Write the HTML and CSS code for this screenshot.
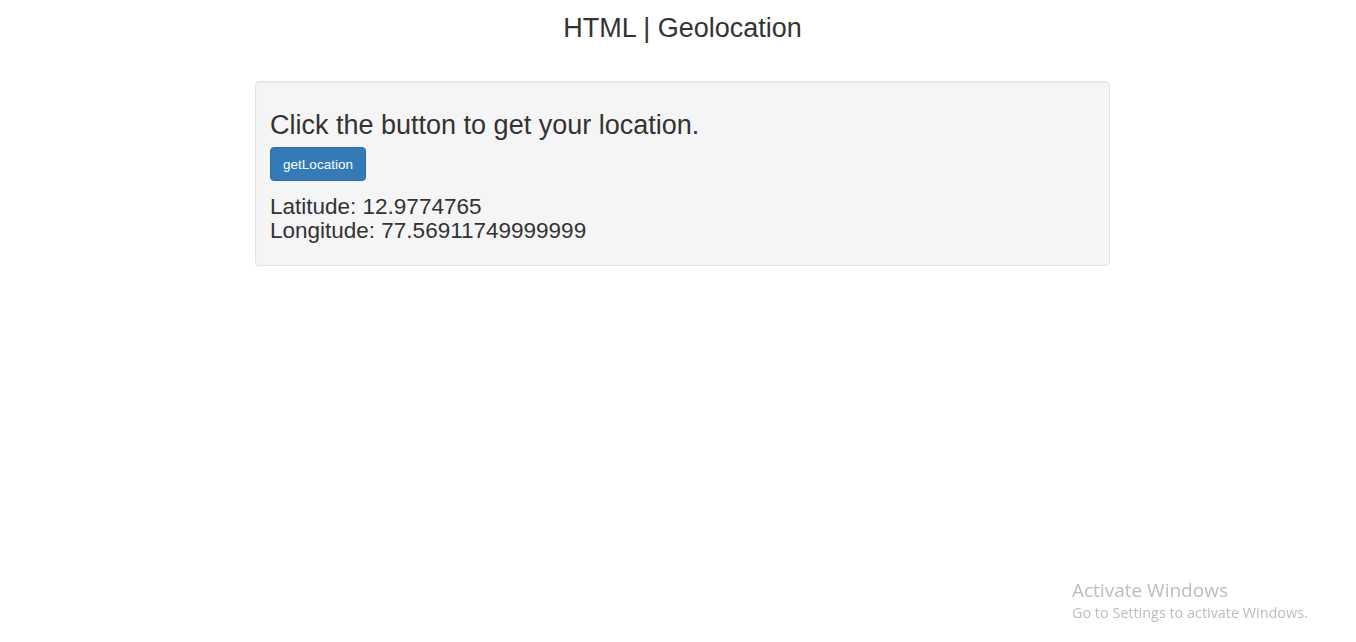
FILE: index.html
```html
<!DOCTYPE html>
<html>
<head>
<meta charset="utf-8">
<title>HTML | Geolocation</title>
<link rel="stylesheet" href="styles.css">
</head>
<body>
<div class="container">
  <h1 class="title">HTML | Geolocation</h1>
  <div class="well">
    <p class="lead">Click the button to get your location.</p>
    <button class="btn">getLocation</button>
    <p class="coords">Latitude: 12.9774765<br>Longitude: 77.56911749999999</p>
  </div>
</div>
<div class="watermark">
  <div class="wm-title">Activate Windows</div>
  <div class="wm-sub">Go to Settings to activate Windows.</div>
</div>
</body>
</html>
```
FILE: styles.css
```css
html, body {
  margin: 0;
  padding: 0;
  background: #fff;
}
body {
  font-family: "Liberation Sans", Arial, sans-serif;
  color: #333;
}
.container {
  width: 855px;
  margin-left: 255px;
}
.title {
  margin: 0;
  padding-top: 13px;
  text-align: center;
  font-size: 27px;
  font-weight: 400;
  line-height: 30px;
  color: #333;
}
.well {
  margin-top: 38px;
  min-height: 185px;
  box-sizing: border-box;
  background: #f5f5f5;
  border: 1px solid #e3e3e3;
  border-radius: 4px;
  padding: 25px 14px 22px;
  box-shadow: inset 0 1px 1px rgba(0,0,0,.05);
}
.lead {
  margin: 0;
  font-size: 27px;
  line-height: 36px;
}
.btn {
  display: block;
  margin-top: 4px;
  width: 96px;
  height: 34px;
  padding: 0;
  background: #337ab7;
  border: 1px solid #2e6da4;
  border-radius: 4px;
  color: #fff;
  font-family: "Liberation Sans", Arial, sans-serif;
  font-size: 13.5px;
}
.coords {
  margin: 14px 0 0;
  font-size: 22.5px;
  line-height: 24px;
}
.watermark {
  position: fixed;
  left: 1072px;
  top: 578px;
  color: #bdbdbd;
  font-family: "Open Sans", "Noto Sans", sans-serif;
}
.wm-title {
  font-size: 19px;
  line-height: 24px;
}
.wm-sub {
  font-size: 14.4px;
  line-height: 21px;
}
```
